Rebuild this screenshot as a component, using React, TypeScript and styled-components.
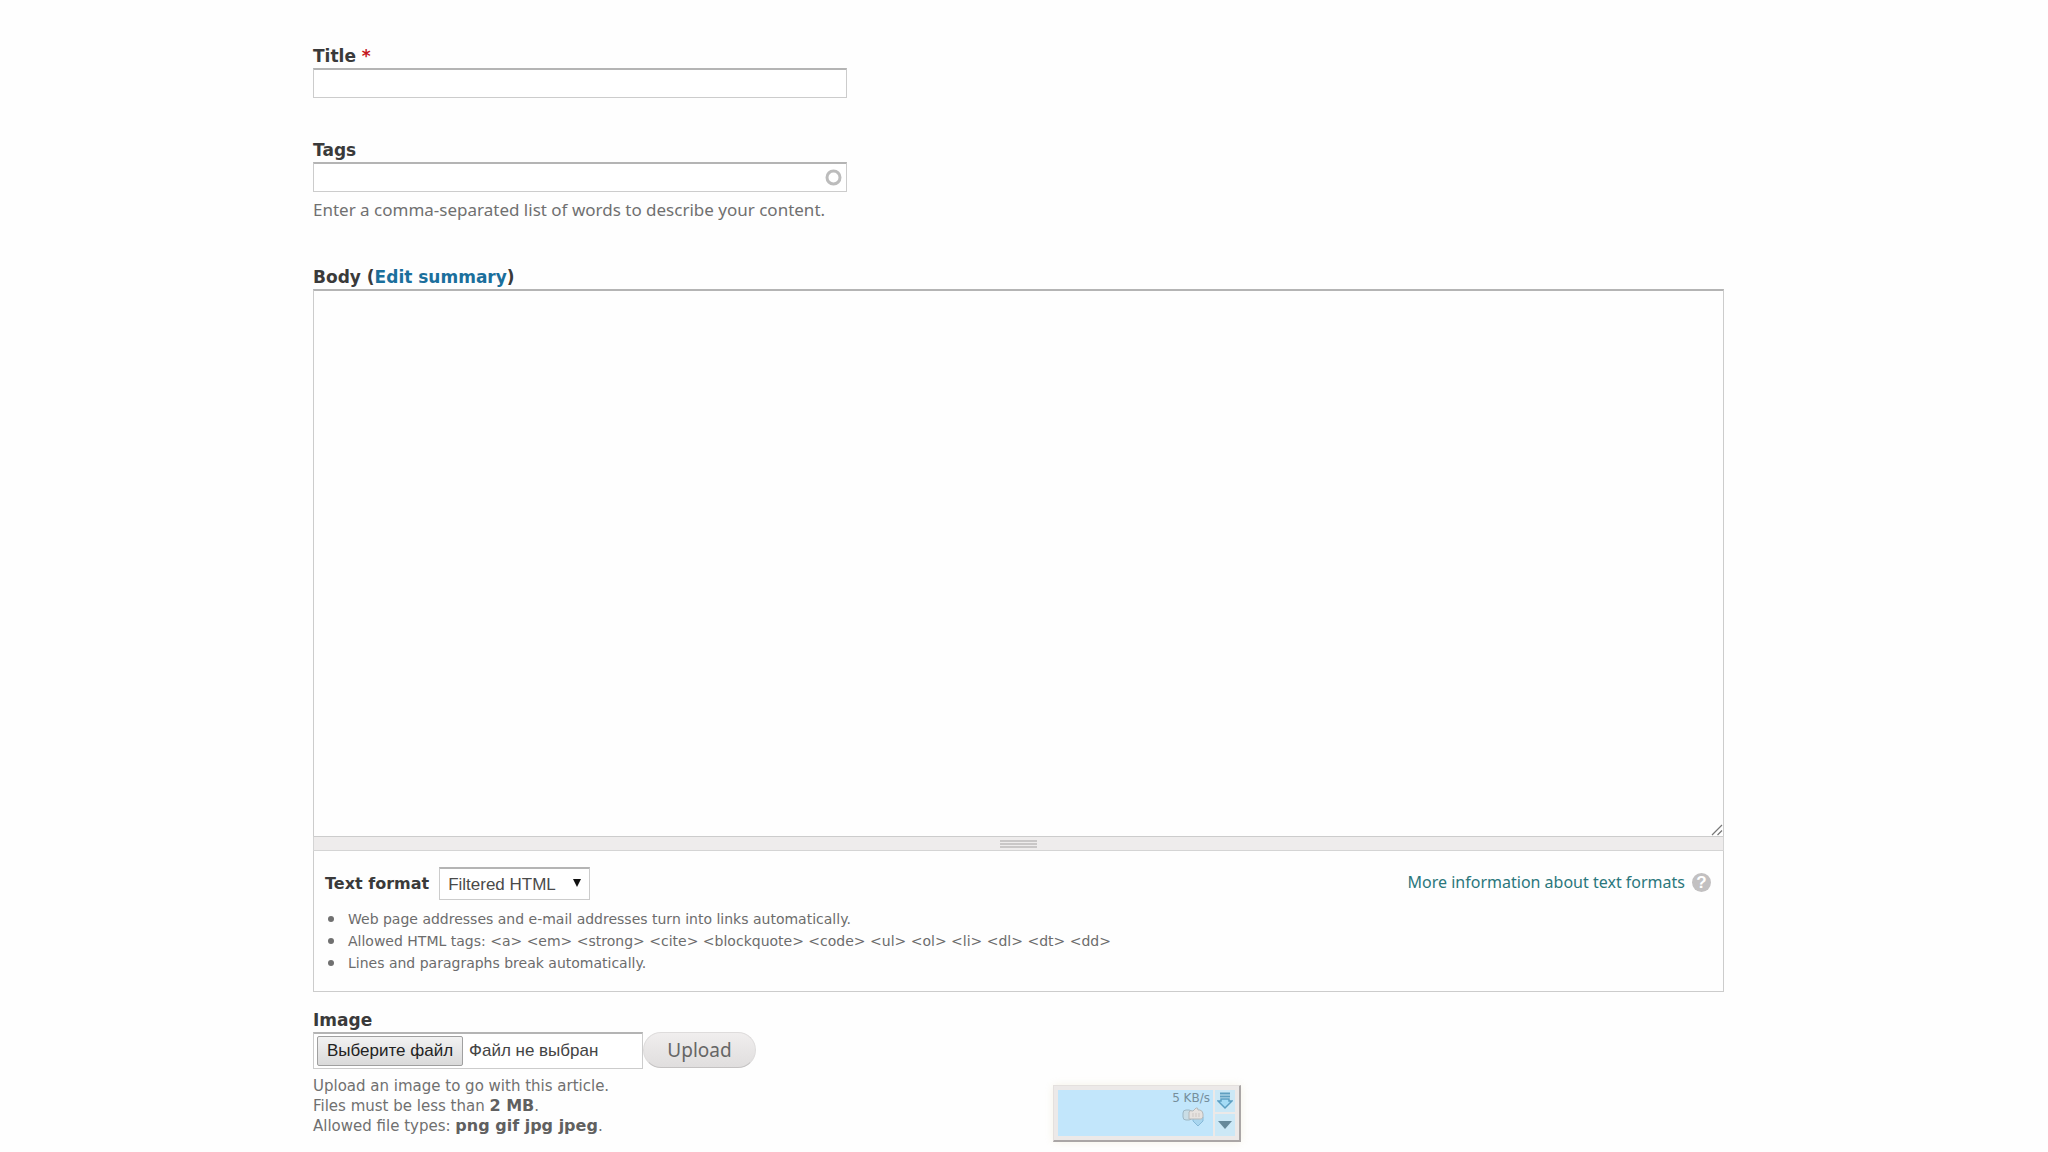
import React, { useState } from "react";
import styled, { createGlobalStyle } from "styled-components";

const sans = '"Noto Sans", "Open Sans", sans-serif';
const wide = '"DejaVu Sans", "Noto Sans", sans-serif';
const control = '"Liberation Sans", Arial, sans-serif';

const Global = createGlobalStyle`
  *, *::before, *::after { box-sizing: border-box; }
  body { margin: 0; background: #fefefe; color: #333; font-family: ${sans}; }
`;

const Form = styled.form`
  padding: 43px 324px 12px 313px;
`;

const Field = styled.div<{ $after?: number }>`
  display: flex;
  flex-direction: column;
  align-items: flex-start;
  margin-bottom: ${(p) => p.$after ?? 0}px;
`;

const Caption = styled.div`
  height: 25px;
  font: bold 17px/26px ${wide};
  color: #3a3a3a;
`;

const Required = styled.span`
  color: #c4161c;
`;

const BodyLink = styled.a`
  color: #1a6f9c;
  text-decoration: none;
`;

const InputWrap = styled.div`
  position: relative;
  width: 100%;
  max-width: 534px;
`;

const TextInput = styled.input`
  display: block;
  width: 100%;
  height: 30px;
  padding: 2px 6px;
  border: 1px solid #ccc;
  border-top: 2px solid #b4b4b4;
  background: #fff;
  font: 17px ${control};
  outline: none;
`;

const Throbber = styled.svg`
  position: absolute;
  right: 5px;
  top: 7px;
  width: 17px;
  height: 17px;
`;

const Description = styled.div<{ $font: string }>`
  margin-top: 8px;
  font: ${(p) => p.$font};
  color: #707070;
`;

const Strong = styled.strong`
  font: bold 16px/19px ${wide};
  color: #606060;
`;

const BodyArea = styled.div`
  position: relative;
  width: 100%;
`;

const TextArea = styled.textarea`
  display: block;
  width: 100%;
  height: 547px;
  padding: 6px;
  border: 1px solid #ccc;
  border-top: 2px solid #b4b4b4;
  border-bottom: 0;
  background: #fefefe;
  font: 17px ${control};
  resize: none;
  outline: none;
`;

const Corner = styled.svg`
  position: absolute;
  right: 1px;
  bottom: 0;
  width: 12px;
  height: 12px;
`;

const Grippie = styled.div`
  display: flex;
  justify-content: center;
  align-items: center;
  width: 100%;
  height: 15px;
  border: 1px solid #d4d4d4;
  border-top-color: #ccc;
  background: #eeecec;
`;

const Handle = styled.svg`
  width: 37px;
  height: 8px;
`;

const FormatBox = styled.section`
  width: 100%;
  margin-bottom: 15px;
  padding: 16px 12px 17px 11px;
  border: 1px solid #ccc;
  border-top: 0;
`;

const FormatRow = styled.div`
  display: flex;
  align-items: flex-start;
  justify-content: space-between;
`;

const FormatPick = styled.div`
  display: flex;
  align-items: center;
  gap: 10px;
`;

const FormatLabel = styled.label`
  font: bold 16px/24px ${wide};
  color: #3a3a3a;
`;

const SelectWrap = styled.div`
  position: relative;
`;

const Select = styled.select`
  display: block;
  appearance: none;
  width: 151px;
  height: 33px;
  padding: 0 28px 0 8px;
  border: 1px solid #ccc;
  border-top: 2px solid #b4b4b4;
  border-radius: 0;
  background: #fff;
  color: #4a4a4a;
  font: 17px ${control};
  outline: none;
`;

const Arrow = styled.svg`
  position: absolute;
  right: 9px;
  top: 12px;
  width: 8px;
  height: 8px;
  pointer-events: none;
`;

const HelpLink = styled.a`
  display: flex;
  align-items: center;
  gap: 7px;
  padding-top: 3px;
  color: #2b777c;
  font-size: 16px;
  line-height: 24px;
  text-decoration: none;
`;

const HelpMark = styled.span`
  display: grid;
  place-items: center;
  width: 19px;
  height: 19px;
  border-radius: 50%;
  background: #c2c0c1;
  color: #fff;
  font: bold 17px/19px ${control};
`;

const Tips = styled.ul`
  margin: 8px 0 0;
  padding: 0;
  list-style: none;
  color: #6c6c6c;
  font: 14px/22px ${wide};
`;

const Tip = styled.li`
  display: flex;
  align-items: center;
  gap: 14px;
  padding-left: 3px;

  &::before {
    content: "";
    width: 6px;
    height: 6px;
    border-radius: 50%;
    background: #707070;
  }
`;

const UploadRow = styled.div`
  display: flex;
  align-items: stretch;
  height: 37px;
`;

const FileBox = styled.div`
  position: relative;
  display: flex;
  align-items: center;
  gap: 6px;
  width: 330px;
  padding: 2px 3px;
  border: 1px solid #ccc;
  border-top: 2px solid #b4b4b4;
  background: #fff;
  color: #444;
  font: 17px ${control};
`;

const FileInput = styled.input`
  position: absolute;
  inset: 0;
  width: 100%;
  opacity: 0;
`;

const FileButton = styled.span`
  display: flex;
  align-items: center;
  justify-content: center;
  width: 146px;
  height: 30px;
  border: 1px solid #a0a0a0;
  border-radius: 2px;
  background: linear-gradient(#f2f2f2, #dadada);
  color: #222;
`;

const UploadButton = styled.button`
  width: 113px;
  height: 36px;
  padding: 0;
  border: 1px solid #dedcdc;
  border-bottom-color: #c4c2c2;
  border-radius: 18px;
  background: linear-gradient(#f0eeee, #e0dede);
  color: #666;
  font: 19px ${sans};
`;

const Monitor = styled.aside`
  position: fixed;
  left: 1053px;
  bottom: 10px;
  display: flex;
  gap: 2px;
  width: 188px;
  height: 57px;
  padding: 4px;
  border: 1px solid #e4e0de;
  border-right: 2px solid #aaa6a6;
  border-bottom: 2px solid #aaa6a6;
  background: #ece9e8;
  box-shadow: 0 0 8px rgba(240, 235, 215, 0.6);
`;

const Graph = styled.div`
  display: flex;
  flex: 1;
  flex-direction: column;
  align-items: flex-end;
  padding-right: 3px;
  background: #c2e6fb;
  color: #758e9b;
  font: 12px/16px ${wide};
`;

const Cloud = styled.svg`
  width: 22px;
  height: 22px;
  margin-right: 6px;
`;

const MonitorButtons = styled.div`
  display: grid;
  grid-template-rows: 1fr 1fr;
  gap: 2px;
  width: 20px;
`;

const MonitorButton = styled.button`
  display: grid;
  place-items: center;
  padding: 0;
  border: 0;
  background: #cce8f6;
`;

export default function App() {
  const [file, setFile] = useState("Файл не выбран");
  return (
    <>
      <Global />
      <Form onSubmit={(e) => e.preventDefault()}>
        <Field $after={39}>
          <Caption as="label" htmlFor="title">
            Title <Required>*</Required>
          </Caption>
          <InputWrap>
            <TextInput id="title" type="text" required />
          </InputWrap>
        </Field>

        <Field $after={45}>
          <Caption as="label" htmlFor="tags">Tags</Caption>
          <InputWrap>
            <TextInput id="tags" type="text" />
            <Throbber viewBox="0 0 17 17" aria-hidden="true">
              <circle cx="8.5" cy="8.5" r="6.5" fill="none" stroke="#bcbcbc" strokeWidth="3" />
            </Throbber>
          </InputWrap>
          <Description $font={`17px/19px ${sans}`}>
            Enter a comma-separated list of words to describe your content.
          </Description>
        </Field>

        <Field>
          <Caption>
            <label htmlFor="body">Body</label> (<BodyLink href="#summary">Edit summary</BodyLink>)
          </Caption>
          <BodyArea>
            <TextArea id="body" />
            <Corner viewBox="0 0 12 12" aria-hidden="true">
              <path d="M1 11L11 1M6.500 11L11 6.500" stroke="#777" strokeWidth="1.200" fill="none" />
            </Corner>
          </BodyArea>
          <Grippie>
            <Handle viewBox="0 0 37 8" aria-hidden="true">
              <path d="M0 1H37M0 4H37M0 7H37" stroke="#bdbbbb" strokeWidth="1.500" />
            </Handle>
          </Grippie>
          <FormatBox>
            <FormatRow>
              <FormatPick>
                <FormatLabel htmlFor="format">Text format</FormatLabel>
                <SelectWrap>
                  <Select id="format" defaultValue="filtered">
                    <option value="filtered">Filtered HTML</option>
                  </Select>
                  <Arrow viewBox="0 0 8 8" aria-hidden="true">
                    <path d="M0 0H8L4 8Z" fill="#111" />
                  </Arrow>
                </SelectWrap>
              </FormatPick>
              <HelpLink href="#formats">
                More information about text formats
                <HelpMark>?</HelpMark>
              </HelpLink>
            </FormatRow>
            <Tips>
              <Tip>Web page addresses and e-mail addresses turn into links automatically.</Tip>
              <Tip>
                {"Allowed HTML tags: <a> <em> <strong> <cite> <blockquote> <code> <ul> <ol> <li> <dl> <dt> <dd>"}
              </Tip>
              <Tip>Lines and paragraphs break automatically.</Tip>
            </Tips>
          </FormatBox>
        </Field>

        <Field>
          <Caption as="label" htmlFor="image">Image</Caption>
          <UploadRow>
            <FileBox>
              <FileButton>Выберите файл</FileButton>
              <span>{file}</span>
              <FileInput
                id="image"
                type="file"
                accept=".png,.gif,.jpg,.jpeg"
                onChange={(e) => setFile(e.target.files?.[0]?.name ?? "Файл не выбран")}
              />
            </FileBox>
            <UploadButton type="submit">Upload</UploadButton>
          </UploadRow>
          <Description $font={`15px/19px ${wide}`}>
            Upload an image to go with this article.
            <br />
            Files must be less than <Strong>2 MB</Strong>.
            <br />
            Allowed file types: <Strong>png gif jpg jpeg</Strong>.
          </Description>
        </Field>
      </Form>

      <Monitor>
        <Graph>
          5 KB/s
          <Cloud viewBox="0 0 22 22" aria-hidden="true">
            <path d="M11 15L16 20L21 15V11H11Z" fill="#a9d6ef" stroke="#86b9d8" />
            <rect x="1" y="4" width="9" height="10" rx="3" fill="#c9dde6" stroke="#9db7c4" />
            <path d="M7 13V6Q8 4 11 5L14 2Q16 1 16 4H18Q21 5 21 8V11Q20 14 17 13Z" fill="#e6e2df" stroke="#b3b8bb" />
            <path d="M11 7V11M14 7V11M17 7V11" stroke="#cdc7c4" />
          </Cloud>
        </Graph>
        <MonitorButtons>
          <MonitorButton type="button" aria-label="Download">
            <svg width="16" height="18" viewBox="0 0 16 18">
              <path d="M3 1.500H13M3 4.500H13" stroke="#5f9fc0" strokeWidth="2" />
              <path d="M4 7H12V9H15L8 16L1 9H4Z" fill="#a5dcf6" stroke="#5c9fc2" strokeWidth="1.500" />
            </svg>
          </MonitorButton>
          <MonitorButton type="button" aria-label="Menu">
            <svg width="14" height="8" viewBox="0 0 14 8">
              <path d="M0 0H14L7 8Z" fill="#67899a" />
            </svg>
          </MonitorButton>
        </MonitorButtons>
      </Monitor>
    </>
  );
}
